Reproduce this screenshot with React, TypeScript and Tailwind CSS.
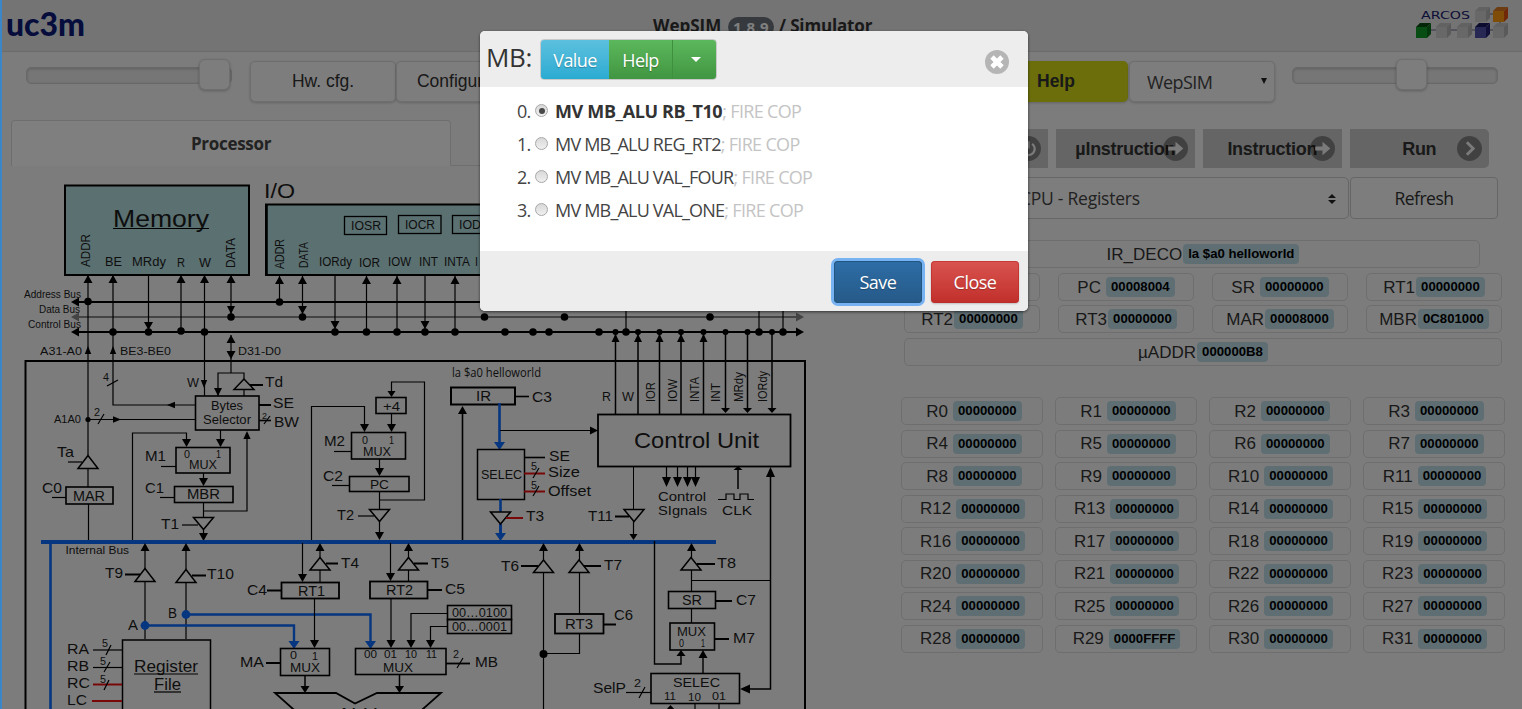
import React from "react";

const BLUE = "#0a6cff";
const RED = "#f01010";
const INK = "#000";

type Dir = "u" | "d" | "l" | "r";

/* Arrow head whose tip is at (x, y). */
function Head({ x, y, d, c = INK, s = 4.5, l = 8 }: { x: number; y: number; d: Dir; c?: string; s?: number; l?: number }) {
  const pts = {
    u: `${x},${y} ${x - s},${y + l} ${x + s},${y + l}`,
    d: `${x},${y} ${x - s},${y - l} ${x + s},${y - l}`,
    l: `${x},${y} ${x + l},${y - s} ${x + l},${y + s}`,
    r: `${x},${y} ${x - l},${y - s} ${x - l},${y + s}`,
  }[d];
  return <polygon points={pts} fill={c} />;
}

function L({ p, c = INK, w = 1.2 }: { p: string; c?: string; w?: number }) {
  return <polyline points={p} fill="none" stroke={c} strokeWidth={w} />;
}

function Box({ x, y, r, b, w = 1.6, fill = "none" }: { x: number; y: number; r: number; b: number; w?: number; fill?: string }) {
  return <rect x={x} y={y} width={r - x} height={b - y} fill={fill} stroke={INK} strokeWidth={w} />;
}

/* Text that spans from x to r on baseline y. */
function T({ x, r, y, s = 15, u = false, f = "Liberation Sans", children }: { x: number; r: number; y: number; s?: number; u?: boolean; f?: string; children: string }) {
  return (
    <>
      <text x={x} y={y} fontSize={s} fill="#1c1c1c" textLength={r - x} lengthAdjust="spacingAndGlyphs" fontFamily={`"${f}", sans-serif`}>
        {children}
      </text>
      {u && <L p={`${x},${y + 2} ${r},${y + 2}`} w={1.2} />}
    </>
  );
}

/* Upward-reading text between y (bottom) and t (top), baseline at x. */
function V({ x, y, t, s = 12.5, children }: { x: number; y: number; t: number; s?: number; children: string }) {
  return (
    <text transform={`translate(${x} ${y}) rotate(-90)`} fontSize={s} fill="#1c1c1c" textLength={y - t} lengthAdjust="spacingAndGlyphs" fontFamily='"Liberation Sans", sans-serif'>
      {children}
    </text>
  );
}

function TriUp({ x, y, h = 13 }: { x: number; y: number; h?: number }) {
  return <polygon points={`${x},${y} ${x - 10},${y + h} ${x + 10},${y + h}`} fill="#fafafa" stroke={INK} strokeWidth={1.5} />;
}
function TriDown({ x, y, h = 12 }: { x: number; y: number; h?: number }) {
  return <polygon points={`${x - 10},${y} ${x + 10},${y} ${x},${y + h}`} fill="#fafafa" stroke={INK} strokeWidth={1.5} />;
}
function Dot({ x, y, c = INK, r = 3.8 }: { x: number; y: number; c?: string; r?: number }) {
  return <circle cx={x} cy={y} r={r} fill={c} />;
}

function Processor() {
  return (
    <svg className="block h-[539px] w-[820px]" viewBox="0 170 820 539">
      {/* memory and I/O modules */}
      <Box x={65} y={185.5} r={249} b={275} w={2} fill="#b6e0e2" />
      <T x={113} r={209} y={226.5} s={24} u>Memory</T>
      <V x={90} y={267} t={234}>ADDR</V>
      <T x={105} r={122} y={266} s={12.5}>BE</T>
      <T x={132} r={166} y={266} s={12.5}>MRdy</T>
      <T x={177} r={185} y={267} s={12.5}>R</T>
      <T x={199} r={211} y={267} s={12.5}>W</T>
      <V x={235} y={268} t={238}>DATA</V>
      <T x={264} r={295} y={198} s={20.5}>I/O</T>
      <Box x={266} y={204.5} r={620} b={275} w={2} fill="#b6e0e2" />
      <L p="266.5,204 266.5,276" w={2.6} />
      <Box x={344.5} y={216.5} r={386.5} b={234.5} w={1.3} />
      <T x={351} r={381} y={230} s={12}>IOSR</T>
      <Box x={398.5} y={215.5} r={441} b={233.5} w={1.3} />
      <T x={405} r={435} y={229} s={12}>IOCR</T>
      <Box x={452.5} y={215.5} r={495} b={233.5} w={1.3} />
      <T x={459} r={490} y={229} s={12}>IODR</T>
      <V x={284} y={269} t={239}>ADDR</V>
      <V x={307.5} y={268} t={242}>DATA</V>
      <T x={319} r={352} y={266} s={12}>IORdy</T>
      <T x={359} r={380} y={267} s={12}>IOR</T>
      <T x={388} r={411} y={266} s={12}>IOW</T>
      <T x={419} r={438} y={266} s={12}>INT</T>
      <T x={444} r={470} y={266} s={12}>INTA</T>
      <T x={475} r={478} y={266} s={12}>I</T>

      {/* system buses */}
      <L p="78,302 800,302" w={2} /><Head x={71} y={302} d="l" />
      <L p="78,317 797,317" w={2} c="#888" /><Head x={71} y={317} d="l" c="#888" /><Head x={804} y={317} d="r" c="#888" />
      <L p="78,332 797,332" w={2} /><Head x={71} y={332} d="l" /><Head x={804} y={332} d="r" />
      <T x={24} r={81} y={298} s={10}>Address Bus</T>
      <T x={39} r={80} y={313} s={10}>Data Bus</T>
      <T x={28} r={81} y={328} s={10}>Control Bus</T>
      <T x={40} r={82} y={355} s={11.5}>A31-A0</T>
      <T x={120} r={171} y={355} s={11.5}>BE3-BE0</T>
      <T x={238} r={281} y={355} s={11.5}>D31-D0</T>

      {/* memory side lines */}
      <L p="88,276 88,455" /><Head x={88} y={275} d="u" /><Dot x={88} y={301.5} /><Head x={88} y={346} d="u" s={3.2} />
      <L p="113,276 113,405 196,405" /><Head x={113} y={275} d="u" /><Dot x={113} y={332} /><Head x={113} y={346} d="u" s={3.2} /><Head x={167} y={405} d="l" s={3.2} />
      <L p="148.5,276 148.5,332" /><Head x={148.5} y={330} d="d" /><Dot x={148.5} y={332} />
      <L p="181,276 181,332" /><Head x={181} y={275} d="u" /><Dot x={181} y={331} />
      <L p="204.5,276 204.5,396" /><Head x={204.5} y={275} d="u" /><Dot x={204.5} y={332} /><Head x={204} y={388} d="d" s={3.2} />
      <L p="231,276 231,317" /><Head x={231} y={275} d="u" /><Head x={231} y={314} d="d" s={4} /><Dot x={231} y={317} />
      <L p="231,335 231,373" /><Head x={231} y={335} d="u" /><Head x={231} y={359} d="d" />

      {/* I/O side lines */}
      <L p="279.5,276 279.5,302" /><Head x={279.5} y={276} d="u" /><Dot x={279.5} y={302} />
      <L p="302.5,276 302.5,317" /><Head x={302.5} y={276} d="u" /><Head x={302.5} y={314} d="d" /><Dot x={302.5} y={317} />
      {[335, 425].map((x) => <g key={x}><L p={`${x},276 ${x},332`} /><Head x={x} y={329} d="d" /><Dot x={x} y={332} /></g>)}
      {[366.5, 397, 455].map((x) => <g key={x}><L p={`${x},276 ${x},332`} /><Head x={x} y={276} d="u" /><Dot x={x} y={332} /></g>)}
      {[484.5, 564.5, 710].map((x) => <Dot key={x} x={x} y={317} />)}
      {[626, 759, 783].map((x) => <g key={x}><L p={`${x},300 ${x},332`} /><Dot x={x} y={332} /></g>)}
      {[505, 533, 549, 599].map((x) => <Dot key={x} x={x} y={332} />)}

      {/* CPU frame */}
      <L p="25.5,709 25.5,361 805,361 805,709" w={2} />

      {/* byte selector */}
      <L p="107,386 118,380" /><T x={103} r={109} y={381} s={11}>4</T>
      <T x={187} r={199} y={387} s={13}>W</T>
      <L p="218,396 218,373 244,373 244,379" /><Head x={218} y={396} d="d" s={4} />
      <TriUp x={244} y={379} h={10.5} /><L p="244,390 244,396" /><L p="250,385 263,385" w={2} /><T x={265} r={283} y={387}>Td</T>
      <Box x={195.5} y={396} r={259} b={430} />
      <T x={211} r={243} y={410} s={12}>Bytes</T><T x={203} r={251} y={424} s={12}>Selector</T>
      <L p="259,405 271,405" w={2} /><T x={273} r={294} y={408}>SE</T>
      <L p="259,420.5 271,420.5" w={1.6} /><T x={262} r={267} y={419} s={9}>2</T><L p="264,424 270,416" /><T x={274} r={299} y={427}>BW</T>
      <T x={54} r={81} y={423} s={11.5}>A1A0</T><Dot x={88} y={419.5} r={2.6} /><L p="88,419.5 196,419.5" /><Head x={121} y={419.5} d="r" s={3.2} />
      <T x={94} r={100} y={416} s={11}>2</T><L p="98,424 104,414" />
      <L p="220.5,430 220.5,446" /><Head x={220.5} y={447} d="d" />
      <L p="132.5,541 132.5,433 186.5,433 186.5,440" /><Head x={186.5} y={447} d="d" />
      <Box x={176} y={447.5} r={230} b={473} />
      <T x={184} r={190} y={458} s={11}>0</T><T x={216} r={221} y={458} s={11}>1</T><T x={189} r={217} y={469} s={12}>MUX</T>
      <T x={145} r={166} y={461}>M1</T><L p="161,466.5 176,466.5" />
      <L p="203.5,473 203.5,480" /><Head x={203.5} y={486} d="d" />
      <Box x={174.5} y={486.5} r={233} b={502.5} /><T x={187} r={220} y={499} s={14}>MBR</T>
      <T x={145} r={164} y={493}>C1</T><L p="160,497.5 174,497.5" />
      <L p="203.5,502 203.5,517" /><L p="203.5,511 247,511 247,438" /><Head x={247} y={431} d="u" s={3.6} />
      <L p="203.5,530 203.5,536" /><Head x={203.5} y={541} d="d" /><TriDown x={203.5} y={517.5} />
      <T x={161} r={179} y={529}>T1</T><L p="182,525 198,525" />
      <T x={57} r={74} y={457}>Ta</T><L p="68,462 82,462" /><L p="88,468 88,487" /><TriUp x={88} y={455.5} />
      <Box x={66} y={487} r={113} b={504} /><T x={73} r={105} y={500.5} s={14}>MAR</T>
      <T x={42} r={62} y={493}>C0</T><L p="52,497.5 66,497.5" /><L p="88.5,504 88.5,541" />

      {/* program counter */}
      <Box x={376} y={397.5} r={406} b={413.5} /><T x={383} r={400} y={411} s={13.5}>+4</T>
      <L p="379.5,500 424.5,500 424.5,382 391.5,382 391.5,391" /><Head x={391.5} y={397} d="d" s={4} l={6} />
      <L p="391.5,413 391.5,426" /><Head x={391.5} y={432} d="d" />
      <L p="311.5,541 311.5,406.5 364.5,406.5 364.5,426" /><Head x={364.5} y={432} d="d" />
      <Box x={351.5} y={432.5} r={405.5} b={459} />
      <T x={362} r={368} y={444} s={11}>0</T><T x={389} r={394} y={444} s={11}>1</T><T x={363} r={391} y={456} s={12}>MUX</T>
      <T x={324} r={345} y={446}>M2</T><L p="334,451.5 352,451.5" />
      <L p="379.5,459 379.5,470" /><Head x={379.5} y={476} d="d" />
      <Box x={349.5} y={476.5} r={409} b={491.5} /><T x={370} r={389} y={489} s={13.5}>PC</T>
      <T x={323} r={343} y={481}>C2</T><L p="332,485.5 349,485.5" />
      <L p="379.5,491 379.5,509" /><L p="379.5,521 379.5,535" /><Head x={379.5} y={540} d="d" /><TriDown x={379.5} y={509.5} />
      <T x={337} r={354} y={520}>T2</T><L p="358,516 374,516" />

      {/* instruction register */}
      <T x={452} r={541} y={377} s={12} f="Open Sans">la $a0 helloworld</T>
      <Box x={451} y={387.5} r={515} b={404.5} w={2} /><T x={476} r={491} y={401} s={14}>IR</T>
      <L p="515,396.5 529,396.5" w={1.6} /><T x={532} r={552} y={402}>C3</T>
      <L p="462.5,541 462.5,412" w={1.6} /><Head x={462.5} y={406} d="u" />
      <L p="499.5,403 499.5,443" c={BLUE} w={2.6} /><Head x={499.5} y={450} d="d" c={BLUE} s={5.5} />
      <L p="500,430.5 592,430.5" /><Head x={598} y={430.5} d="r" s={4} />
      <Box x={477.5} y={449.5} r={524.5} b={499.5} w={1.5} /><T x={481} r={522} y={479} s={13}>SELEC</T>
      <L p="525,457.5 545,457.5" w={1.6} /><T x={549} r={570} y={461}>SE</T>
      <L p="524,473.5 545,473.5" c={RED} w={2} /><T x={531} r={537} y={470} s={11}>5</T><L p="533,478 539,468" /><T x={548} r={580} y={477} s={14.5}>Size</T>
      <L p="524,491.5 545,491.5" c={RED} w={2} /><T x={531} r={537} y={489} s={11}>5</T><L p="533,496 539,486" /><T x={548} r={591} y={496} s={14.5}>Offset</T>
      <L p="500.5,499 500.5,512" c={BLUE} w={2.6} /><L p="500.5,524 500.5,534" c={BLUE} w={3} /><Head x={500.5} y={541} d="d" c={BLUE} s={5.5} />
      <TriDown x={500.5} y={512} /><L p="506,518 523,518" c={RED} w={2} /><T x={526} r={544} y={521}>T3</T>

      {/* control unit */}
      {[615.5, 638, 659.5, 681, 703.5].map((x) => <g key={x}><L p={`${x},332 ${x},414`} w={1.5} /><Head x={x} y={334} d="u" s={4} /><Dot x={x} y={332} r={3} /></g>)}
      {[725.5, 747.5, 772].map((x) => <g key={x}><L p={`${x},332 ${x},410`} w={1.5} /><Head x={x} y={413} d="d" l={5} /><Dot x={x} y={332} r={3} /></g>)}
      <T x={602} r={611} y={401} s={12.5}>R</T><T x={622} r={634} y={401} s={12.5}>W</T>
      <V x={654.5} y={402} t={382}>IOR</V><V x={676.5} y={402} t={379}>IOW</V><V x={699} y={402} t={377}>INTA</V>
      <V x={720} y={402} t={383}>INT</V><V x={742.5} y={402} t={372}>MRdy</V><V x={767} y={402} t={371}>IORdy</V>
      <Box x={598} y={414.5} r={790.5} b={466.5} w={1.8} /><T x={634} r={759} y={448} s={22}>Control Unit</T>
      <L p="633.5,466 633.5,509" w={1} /><L p="633.5,521 633.5,535" /><Head x={633.5} y={540} d="d" s={4} l={6} /><TriDown x={634} y={509.5} />
      <T x={588} r={613} y={521}>T11</T><L p="615,516.5 629,516.5" w={2} />
      {[666.5, 677.5, 687.5, 695.5].map((x) => <g key={x}><L p={`${x},467 ${x},480`} /><Head x={x} y={487} d="d" l={10} /></g>)}
      <T x={658} r={706} y={501} s={13}>Control</T><T x={658} r={707} y={514.5} s={13}>SIgnals</T>
      <L p="738,489 738,470" w={1.5} /><Head x={738} y={466} d="u" l={4} />
      <L p="718,499.5 726,499.5 726,494 734,494 734,499.5 740,499.5 740,494 748,494 748,499.5 754,499.5" />
      <T x={722} r={752} y={515} s={13.5}>CLK</T>
      <L p="770.5,474 770.5,689 745,689" w={1.5} /><Head x={770.5} y={467} d="u" l={10} /><Head x={740} y={689} d="l" l={10} />

      {/* internal bus */}
      <L p="41,542 716,542" c={BLUE} w={4} /><L p="50.5,542 50.5,709" c={BLUE} w={2.6} />
      <T x={65.5} r={129} y={554} s={11}>Internal Bus</T>

      {/* register file */}
      <L p="145,545 145,639" /><Head x={145} y={543} d="u" /><TriUp x={145} y={568.5} /><T x={105} r={123} y={578}>T9</T><L p="125,574.5 140,574.5" w={2} />
      <L p="186,545 186,639" /><Head x={186} y={543} d="u" /><TriUp x={186} y={569.5} /><T x={207} r={234} y={579}>T10</T><L p="192,575.5 206,575.5" w={2} />
      <L p="145,625.5 294,625.5 294,642" c={BLUE} w={2.4} /><Head x={294} y={649} d="d" c={BLUE} s={5.5} />
      <L p="186,614.5 370.5,614.5 370.5,642" c={BLUE} w={2.4} /><Head x={370.5} y={649} d="d" c={BLUE} s={5.5} />
      <Dot x={145} y={625.5} c={BLUE} r={4.4} /><Dot x={186} y={614.5} c={BLUE} r={4.4} />
      <T x={128} r={138} y={630} s={14}>A</T><T x={168} r={177} y={618} s={14}>B</T>
      <Box x={122.5} y={640} r={210.5} b={720} w={1.5} />
      <T x={134} r={198} y={672} s={16} u>Register</T><T x={154} r={181} y={690} s={16} u>File</T>
      <T x={67} r={89} y={654}>RA</T><L p="93,650 122,650" /><T x={102} r={108} y={647} s={11}>5</T><L p="106,655 111,645" />
      <T x={67} r={89} y={671}>RB</T><L p="93,667.5 122,667.5" /><T x={100} r={106} y={665} s={11}>5</T><L p="104,672 110,662" />
      <T x={67} r={90} y={688}>RC</T><L p="93,684.5 122,684.5" c={RED} w={2} /><T x={100} r={106} y={683} s={11}>5</T><L p="104,690 109,680" />
      <T x={67} r={87} y={705}>LC</T><L p="92,701 122,701" c={RED} w={2} />

      {/* temporary registers and ALU inputs */}
      <L p="302.5,543 302.5,576" /><Head x={302.5} y={582} d="d" /><L p="320,545 320,582" /><Head x={320} y={543} d="u" /><TriUp x={320} y={557.5} h={12.5} />
      <L p="326,563.5 338,563.5" w={2} /><T x={341} r={359} y={568}>T4</T>
      <Box x={281.5} y={582.5} r={339} b={598.5} w={1.8} /><T x={298} r={325} y={596} s={14}>RT1</T><T x={247} r={267} y={595}>C4</T><L p="267,590.5 281,590.5" w={2} />
      <L p="314.5,598 314.5,642" /><Head x={314.5} y={648} d="d" />
      <L p="390.5,543 390.5,575" /><Head x={390.5} y={581} d="d" /><L p="408.5,545 408.5,582" /><Head x={408.5} y={543} d="u" /><TriUp x={408.5} y={557.5} h={12.5} />
      <L p="414,563.5 428,563.5" w={2} /><T x={431} r={449} y={568}>T5</T>
      <Box x={370} y={581.5} r={427.5} b={598.5} w={1.8} /><T x={386} r={413} y={595} s={14}>RT2</T><L p="427,590 442,590" w={2} /><T x={445} r={465} y={594}>C5</T>
      <L p="391,598 391,642" /><Head x={391} y={648} d="d" />
      <Box x={447.5} y={605.5} r={511.5} b={619.5} /><Box x={447.5} y={619.5} r={511.5} b={633.5} />
      <T x={452} r={507} y={616.5} s={12}>00…0100</T><T x={452} r={507} y={630.5} s={12}>00…0001</T>
      <L p="447,613.5 411,613.5 411,642" /><Head x={411} y={648} d="d" /><L p="447,626.5 430.5,626.5 430.5,642" /><Head x={430.5} y={648} d="d" />
      <Box x={280.5} y={648.5} r={329.5} b={675.5} /><T x={290} r={297} y={659} s={11}>0</T><T x={312} r={318} y={660} s={11}>1</T><T x={290} r={320} y={672} s={13}>MUX</T>
      <T x={240} r={264} y={667}>MA</T><L p="266,663 281,663" w={2} />
      <Box x={355.5} y={648.5} r={446} b={674.5} /><T x={364} r={377} y={658} s={11}>00</T><T x={384} r={397} y={658} s={11}>01</T><T x={405} r={417} y={658} s={11}>10</T><T x={426} r={437} y={658} s={11}>11</T>
      <T x={383} r={413} y={672} s={13}>MUX</T><L p="446,663.5 470,663.5" w={1.8} /><T x={453} r={459} y={658} s={11}>2</T><L p="457,668 463,658" /><T x={475} r={498} y={667}>MB</T>
      <L p="305,675 305,688" w={1.5} /><Head x={305} y={693} d="d" l={7} /><L p="399.5,675 399.5,688" w={1.5} /><Head x={399.5} y={693} d="d" l={7} />
      <polygon points="275,693 336,693 355,703.5 377,693 441,693 415,716 301,716" fill="none" stroke={INK} strokeWidth={1.8} />
      <T x={337} r={378} y={722} s={21}>ALU</T>

      {/* T6, T7 and RT3 */}
      <L p="543.5,545 543.5,709" /><Head x={543.5} y={543} d="u" /><TriUp x={543.5} y={560} h={12.5} /><Dot x={543.5} y={654} r={4} />
      <T x={501} r={519} y={571}>T6</T><L p="521,566 538,566" w={2} />
      <L p="579.5,545 579.5,614" /><L p="579.5,633 579.5,653.5 543,653.5" /><Head x={579.5} y={543} d="u" /><TriUp x={579} y={560} h={12.5} />
      <L p="584,566 601,566" w={2} /><T x={604} r={622} y={570}>T7</T>
      <Box x={555} y={614} r={603.5} b={633.5} w={1.8} /><T x={565} r={593} y={629} s={14}>RT3</T><L p="603,624.5 616,624.5" w={2} /><T x={614} r={633} y={620}>C6</T>

      {/* status register */}
      <L p="691.5,545 691.5,623" /><Head x={691.5} y={543} d="u" /><TriUp x={691} y={557.5} h={12.5} /><L p="697,564 715,564" w={2} /><T x={717} r={736} y={568}>T8</T>
      <L p="691.5,580.5 770,580.5" />
      <Box x={668.5} y={591.5} r={715.5} b={608.5} fill="#fafafa" /><T x={682} r={702} y={605} s={14}>SR</T><L p="716,601 732,601" w={2} /><T x={736} r={756} y={605}>C7</T>
      <Box x={670} y={623} r={714.5} b={650} /><T x={677} r={706} y={635.5} s={12}>MUX</T><T x={679} r={684} y={647} s={10}>0</T><T x={701} r={705} y={647} s={10}>1</T>
      <L p="715,639 729,639" w={2} /><T x={733} r={755} y={643}>M7</T>
      <L p="654.5,541 654.5,664 681,664 681,656" w={1.4} /><Head x={681} y={650} d="u" l={6} /><L p="703,673 703,656" w={1.4} /><Head x={703} y={650} d="u" />
      <Box x={651} y={673.5} r={739.5} b={703.5} /><T x={673} r={720} y={687} s={13}>SELEC</T>
      <T x={664} r={676} y={700} s={11.5}>11</T><T x={688} r={701} y={701} s={11.5}>10</T><T x={712} r={726} y={700} s={11.5}>01</T>
      <T x={593} r={626} y={693} s={14}>SelP</T><L p="626,692.5 651,692.5" /><T x={634} r={641} y={687} s={11}>2</T><L p="639,698 645,687" />
      <Head x={670.5} y={705} d="u" l={5} /><L p="695,704 695,709" /><L p="719,704 719,709" />
    </svg>
  );
}

function Cube({ x, y, f, t, s }: { x: number; y: number; f: string; t: string; s: string }) {
  return (
    <g>
      <polygon points={`${x},${y + 4} ${x + 4},${y} ${x + 15},${y} ${x + 11},${y + 4}`} fill={t} />
      <polygon points={`${x + 11},${y + 4} ${x + 15},${y} ${x + 15},${y + 11} ${x + 11},${y + 15}`} fill={s} />
      <rect x={x} y={y + 4} width={11} height={11} fill={f} />
    </g>
  );
}

function Slider({ pos }: { pos: string }) {
  return (
    <div className="flex h-[17px] w-[206px] items-center rounded-[5px] border border-[#d0d0d0] bg-[#ececec] shadow-[inset_0_1px_3px_rgba(0,0,0,0.2)]">
      <div className={`${pos} -mt-[2px] h-[31px] w-[31px] shrink-0 rounded-[6px] border border-[#ddd] bg-[#fafafa] shadow-[0_1px_3px_rgba(0,0,0,0.25)]`} />
    </div>
  );
}

function Reg({ label, value, pad = "" }: { label: string; value: string; pad?: string }) {
  return (
    <div className={`${pad} flex h-[28px] items-center justify-center rounded-[5px] border border-[#dcdcdc] text-[17px] leading-[26px] text-[#333]`}>
      <span className="pt-px">{label}</span>
      <span className={`${label.length > 2 && !/^R\d/.test(label) ? "ml-[1px]" : "ml-[5px]"} rounded-[4px] bg-[#bcdde7] px-[5px] text-[13.2px] font-bold leading-[20px] text-black`}>{value}</span>
    </div>
  );
}

const ICON = "absolute right-[7px] top-[7px] h-[25px] w-[25px]";

function ExecButton({ label, kind, cls }: { label: string; kind: "power" | "arrow" | "chevron"; cls: string }) {
  return (
    <div className={`relative flex h-[39px] w-[138.5px] items-center justify-center bg-[#cacaca] text-[18px] font-bold text-[#333] ${cls}`}>
      <span className="pt-px tracking-[-0.3px]">{label}</span>
      <svg className={ICON} viewBox="0 0 24 24" fill="none">
        <circle cx="12" cy="12" r="12" fill="#000" fillOpacity="0.35" />
        {kind === "arrow" && <path d="M5 10h7V5.5l7.5 6.5-7.5 6.5V14H5z" fill="#f4f4f4" />}
        {kind === "chevron" && <path d="M9.5 6l6 6-6 6" stroke="#f4f4f4" strokeWidth="2.8" />}
        {kind === "power" && <path d="M8.5 7.5a6 6 0 1 0 7 0M12 5v7" stroke="#f4f4f4" strokeWidth="2.2" />}
      </svg>
    </div>
  );
}

const OPTIONS = ["MV MB_ALU RB_T10", "MV MB_ALU REG_RT2", "MV MB_ALU VAL_FOUR", "MV MB_ALU VAL_ONE"];

function Dialog() {
  return (
    <div className="h-[280px] w-[548px] overflow-hidden rounded-[5px] bg-white font-['Open_Sans',sans-serif] text-[#333] shadow-[0_1px_3px_rgba(0,0,0,0.6)]">
      <div className="flex h-[56px] items-center bg-[#ededed] pl-[6px] pr-[19px]">
        <span className="-mt-[4px] w-[54px] text-[26px] leading-[30px] tracking-[-0.3px]">MB:</span>
        <div className="flex h-[41px] overflow-hidden rounded-[4px] border border-black/15 text-[18px] leading-[40px] tracking-[-0.6px] text-white [text-shadow:0_1px_1px_rgba(0,0,0,0.25)]">
          <span className="w-[68px] bg-gradient-to-b from-[#5bc0de] to-[#2aabd2] text-center">Value</span>
          <span className="w-[64px] border-r border-[#3e8f3e] bg-gradient-to-b from-[#5cb85c] to-[#419641] text-center">Help</span>
          <span className="flex w-[43px] items-center justify-center bg-gradient-to-b from-[#5cb85c] to-[#419641] pl-[3px]">
            <svg width="10" height="5" viewBox="0 0 10 5"><path d="M0 0h10L5 5z" fill="#fff" /></svg>
          </span>
        </div>
        <svg className="ml-auto mt-[6px]" width="24" height="24" viewBox="0 0 24 24">
          <circle cx="12" cy="12" r="12" fill="#b5b5b5" />
          <path d="M7 7l10 10M17 7L7 17" stroke="#fff" strokeWidth="4.8" />
        </svg>
      </div>
      <div className="flex h-[164px] flex-col pl-[37px] pt-[8px]">
        {OPTIONS.map((o, i) => (
          <div key={o} className="flex h-[33px] items-center text-[18px]">
            <span className="w-[18px] tracking-[-0.9px] text-[#444]">{i}.</span>
            <span className="mb-[2px] mr-[7px] flex h-[13px] w-[13px] items-center justify-center rounded-full border border-[#a8a8a8] bg-gradient-to-b from-[#d8d8d8] to-[#f0f0f0]">
              {i === 0 && <span className="h-[6px] w-[6px] rounded-full bg-[#484848]" />}
            </span>
            <span className={i === 0 ? "font-bold tracking-[-0.36px]" : "tracking-[-0.8px] text-[#444]"}>{o}</span>
            <span className="whitespace-pre tracking-[-0.68px] text-[#c4c4c4]">; FIRE COP</span>
          </div>
        ))}
      </div>
      <div className="flex h-[60px] items-start justify-end gap-[9px] bg-[#ededed] pr-[9px] pt-[10px] text-[18px] leading-[43px] tracking-[-0.5px] text-white [text-shadow:0_1px_1px_rgba(0,0,0,0.25)]">
        <span className="h-[42px] w-[88px] rounded-[4px] bg-gradient-to-b from-[#2d6da6] to-[#265a88] text-center shadow-[inset_0_0_0_1px_#245580,0_0_0_3px_#77b2f2]">Save</span>
        <span className="h-[42px] w-[88px] rounded-[4px] bg-gradient-to-b from-[#d9534f] to-[#c12e2a] text-center shadow-[inset_0_0_0_1px_rgba(185,44,40,0.6),0_1px_2px_rgba(0,0,0,0.2)]">Close</span>
      </div>
    </div>
  );
}

const PANEL = "flex h-[41px] items-center rounded-[5px] border border-[#ddd] bg-[#fafafa] shadow-[0_1px_3px_rgba(0,0,0,0.2)]";

export default function App() {
  return (
    <div className="relative h-[709px] w-[1522px] overflow-hidden bg-[#f9f9f9] font-['Liberation_Sans',sans-serif] text-[#333]">
      <header className="grid h-[52px] grid-cols-[653px_1fr_113px] items-start border-b border-[#d8d8d8] bg-[#e9e9e9]">
        <svg className="h-[51px] w-[100px]" viewBox="0 0 100 51">
          <text x="6" y="36" fontFamily="Lato, sans-serif" fontWeight="900" fontSize="33" fill="#0c1a78" textLength="79" lengthAdjust="spacingAndGlyphs">uc3m</text>
        </svg>
        <div className="flex items-center gap-[5px] pt-[14px] font-['Open_Sans',sans-serif] text-[17px] font-bold leading-[24px] tracking-[-0.1px] text-[#333]">
          <span className="w-[70px] tracking-[0px]">WepSIM</span>
          <span className="mt-[2px] w-[46px] rounded-full bg-[#6c757d] text-center text-[15px] leading-[20px] tracking-[0.3px] text-white">1.8.9</span>
          <span className="tracking-[-0.15px]">/ Simulator</span>
        </div>
        <svg className="h-[51px] w-[113px]" viewBox="1409 0 113 51">
          <path d="M1488 14h6M1500 20v6M1430 30h66" stroke="#66668c" strokeWidth="1" />
          <text x="1421" y="19" fontFamily='"DejaVu Sans", sans-serif' fontSize="10.5" fill="#1c1c70" textLength="49" lengthAdjust="spacingAndGlyphs">ARCOS</text>
          <Cube x={1475} y={7} f="#d0d0d0" t="#c4c4c4" s="#b4b4b4" />
          <Cube x={1493} y={7} f="#ff9a10" t="#d87a20" s="#e05010" />
          <Cube x={1416} y={23} f="#109a28" t="#064a10" s="#087018" />
          <Cube x={1436} y={23} f="#d0d0d0" t="#c4c4c4" s="#b4b4b4" />
          <Cube x={1457} y={23} f="#d0d0d0" t="#c4c4c4" s="#b4b4b4" />
          <Cube x={1475} y={23} f="#5050a8" t="#18185c" s="#202070" />
          <Cube x={1493} y={23} f="#d0d0d0" t="#c4c4c4" s="#b4b4b4" />
        </svg>
      </header>

      <div className="flex h-[68px] items-start pl-[26px] pt-[9px] text-[17.5px]">
        <div className="pt-[6px]"><Slider pos="ml-[172px]" /></div>
        <div className={`${PANEL} ml-[18px] w-[146px] justify-center`}>Hw. cfg.</div>
        <div className={`${PANEL} w-[146px] justify-center`}>Configuration</div>
        <div className="ml-auto flex">
          <div className="flex h-[41px] w-[146px] items-center rounded-[5px] bg-[#d6dc14] pl-[55px] font-bold shadow-[0_1px_3px_rgba(0,0,0,0.2)]">Help</div>
          <div className={`${PANEL} ml-[1px] w-[146px] justify-between pl-[17px] pr-[7px] pt-[2px] font-['Open_Sans',sans-serif] text-[18px] tracking-[-0.6px]`}>
            <span className="text-[#444]">WepSIM</span>
            <svg className="mb-[4px]" width="6" height="6" viewBox="0 0 6 6"><path d="M0 0h6L3 6z" fill="#222" /></svg>
          </div>
          <div className="ml-[17px] mr-[24px] pt-[6px]"><Slider pos="ml-[103px]" /></div>
        </div>
      </div>

      <main className="flex">
        <section className="w-[880px]">
          <div className="flex h-[46px] pl-[11px]">
            <div className="flex w-[440px] items-center justify-center rounded-t-[4px] border border-b-0 border-[#ddd] bg-white pt-px font-['Open_Sans',sans-serif] text-[17px] font-bold tracking-[-0.3px] text-[#444]">Processor</div>
            <div className="w-[420px] border-b border-[#ddd]" />
          </div>
          <div className="mt-[4px]"><Processor /></div>
        </section>

        <section className="w-[642px] pl-[21px]">
          <div className="flex gap-[8.5px] pl-[8px] pt-[9px]">
            <ExecButton label="Reset" kind="power" cls="rounded-l-[5px]" />
            <ExecButton label="µInstruction" kind="arrow" cls="" />
            <ExecButton label="Instruction" kind="arrow" cls="" />
            <ExecButton label="Run" kind="chevron" cls="rounded-r-[5px]" />
          </div>
          <div className="mt-[9px] flex pl-[3px] font-['Open_Sans',sans-serif] text-[17.5px] font-light tracking-[-0.2px]">
            <div className="flex h-[42px] w-[445px] items-center justify-between rounded-[5px] border border-[#ccc] bg-[#fafafa] pl-[115px] pr-[12px] pt-px">
              <span className="font-normal tracking-[-0.25px] text-[#444]">CPU - Registers</span>
              <svg width="8" height="10" viewBox="0 0 8 10"><path d="M0 4h8L4 0zM0 6h8L4 10z" fill="#222" /></svg>
            </div>
            <div className="ml-[1px] flex h-[42px] w-[148px] items-center justify-center rounded-[4px] border border-[#ccc] bg-[#fafafa] pt-px font-normal tracking-[-0.5px]">Refresh</div>
          </div>
          <div className="ml-[3px] mt-[21px] flex w-[598px] flex-col">
            <div className="ml-[22px] w-[554px]"><Reg label="IR_DECO" value="la $a0 helloworld" /></div>
            <div className="mt-[5px] grid grid-cols-4 gap-x-[18px] gap-y-[4px]">
              <div className="h-[28px] rounded-[5px] border border-[#dcdcdc]" />
              <Reg label="PC" value="00008004" />
              <Reg label="SR" value="00000000" />
              <Reg label="RT1" value="00000000" />
              <Reg label="RT2" value="00000000" />
              <Reg label="RT3" value="00000000" />
              <Reg label="MAR" value="00008000" />
              <Reg label="MBR" value="0C801000" />
            </div>
            <div className="mt-[5px]"><Reg label="µADDR" value="000000B8" /></div>
          </div>
          <div className="mt-[31px] grid w-[604px] grid-cols-4 gap-x-[12px] gap-y-[4.57px]">
            {Array.from({ length: 32 }, (_, i) => (
              <Reg key={i} label={`R${i}`} value={i === 29 ? "0000FFFF" : "00000000"} pad={i < 10 ? "pl-[4px]" : "pl-[1px]"} />
            ))}
          </div>
        </section>
      </main>

      <div className="absolute inset-0 bg-black/50 pl-[480px] pt-[31px]">
        <Dialog />
      </div>
      <div className="absolute left-0 top-0 h-full w-[1.5px] bg-[#3a86c8]" />
    </div>
  );
}
